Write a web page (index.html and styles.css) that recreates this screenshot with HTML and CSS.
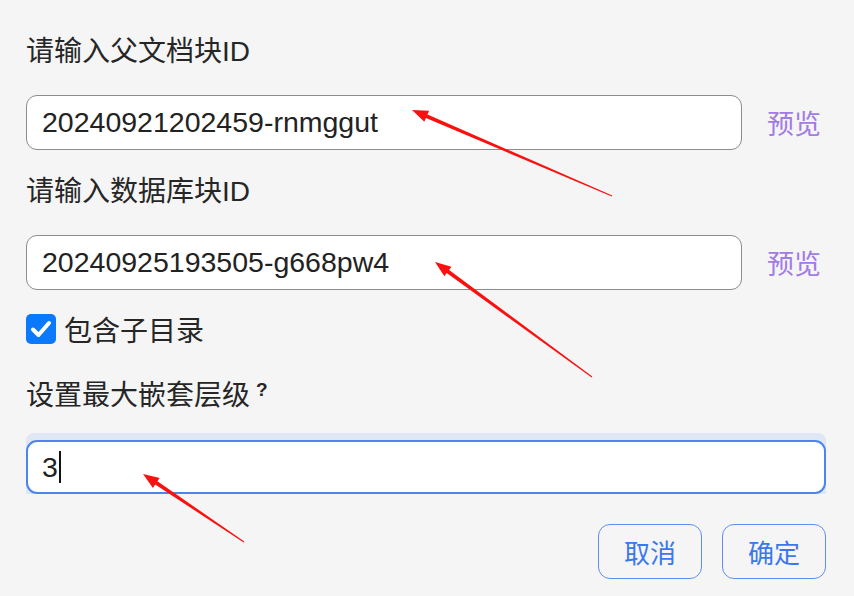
FILE: index.html
```html
<!DOCTYPE html>
<html lang="zh-CN">
<head>
<meta charset="utf-8">
<title>嵌入数据库</title>
<link rel="stylesheet" href="styles.css">
</head>
<body>
<div class="dialog">
  <div class="label">请输入父文档块ID</div>
  <div class="row">
    <div class="field">20240921202459-rnmggut</div>
    <span class="preview">预览</span>
  </div>
  <div class="label">请输入数据库块ID</div>
  <div class="row">
    <div class="field">20240925193505-g668pw4</div>
    <span class="preview">预览</span>
  </div>
  <label class="check-row">
    <svg class="checkbox" width="30" height="30" viewBox="0 0 30 30">
      <rect x="0" y="0" width="30" height="30" rx="5" fill="#0b79fb"/>
      <path d="M7 15.5 L12.5 21 L23 9" fill="none" stroke="#fff" stroke-width="4" stroke-linecap="round" stroke-linejoin="round"/>
    </svg>
    <span>包含子目录</span>
  </label>
  <div class="label label-last">设置最大嵌套层级<span class="hint">?</span></div>
  <div class="focus-wrap">
    <div class="field field-focus">3<span class="caret"></span></div>
  </div>
  <div class="actions">
    <button class="btn">取消</button>
    <button class="btn">确定</button>
  </div>
</div>
<svg class="arrows" width="854" height="596" viewBox="0 0 854 596">
  <polygon fill="#fb1010" points="412,110 429.1,110.8 427.5,114.5 612.2,195.5 611.8,196.5 425.9,118.1 424.3,121.8"/>
  <polygon fill="#fb1010" points="435,262 451.4,266.7 449.1,269.9 592.3,376.6 591.7,377.4 446.7,273.1 444.4,276.3"/>
  <polygon fill="#fb1010" points="143,474 159.7,477.9 157.4,481.2 244.3,541.6 243.7,542.4 155.2,484.6 152.9,487.9"/>
</svg>
</body>
</html>
```

FILE: styles.css
```css
html, body {
  margin: 0;
  padding: 0;
  background: #f5f5f5;
}

body {
  width: 854px;
  height: 596px;
  overflow: hidden;
  position: relative;
  font-family: "Liberation Sans", "Noto Sans CJK SC", sans-serif;
  color: #222;
}

.dialog {
  display: flex;
  flex-direction: column;
  padding: 32px 28px 0 26px;
}

.label {
  font-size: 28px;
  line-height: 40px;
  height: 40px;
  margin-bottom: 23px;
  color: #262626;
}

.label-last {
  margin-top: 32px;
  margin-bottom: 17px;
}

.hint {
  font-size: 19px;
  font-weight: 900;
  margin-left: 6px;
  position: relative;
  top: -9px;
}

.row {
  display: flex;
  align-items: center;
  gap: 25px;
  margin-bottom: 22px;
}

.field {
  box-sizing: border-box;
  height: 55px;
  flex: 1;
  background: #fff;
  border: 1px solid #8c8c8c;
  border-radius: 11px;
  padding-left: 15px;
  font-size: 28.5px;
  line-height: 53px;
  color: #222;
  display: flex;
  align-items: center;
}

.preview {
  width: 59px;
  font-size: 27px;
  color: #a27be6;
}

.check-row {
  display: flex;
  align-items: center;
  gap: 8px;
  height: 30px;
  margin-top: 2px;
  font-size: 28px;
  color: #262626;
}

.checkbox {
  display: block;
}

.focus-wrap {
  background: #dfe6f4;
  padding-top: 7px;
  border-radius: 8px 8px 0 0;
}

.field-focus {
  height: 54px;
  border: 2px solid #4a86ee;
  border-radius: 11px;
  padding-left: 14px;
}

.caret {
  display: inline-block;
  width: 2px;
  height: 32px;
  background: #111;
  margin-left: 1px;
}

.actions {
  display: flex;
  justify-content: flex-end;
  gap: 20px;
  margin-top: 30px;
}

.btn {
  box-sizing: border-box;
  width: 104px;
  height: 55px;
  border: 1px solid #5d8ff0;
  border-radius: 12px;
  background: transparent;
  color: #3a78ec;
  font-family: "Noto Sans CJK SC", sans-serif;
  font-size: 26px;
  padding: 0;
}

.arrows {
  position: absolute;
  left: 0;
  top: 0;
  pointer-events: none;
}
```
